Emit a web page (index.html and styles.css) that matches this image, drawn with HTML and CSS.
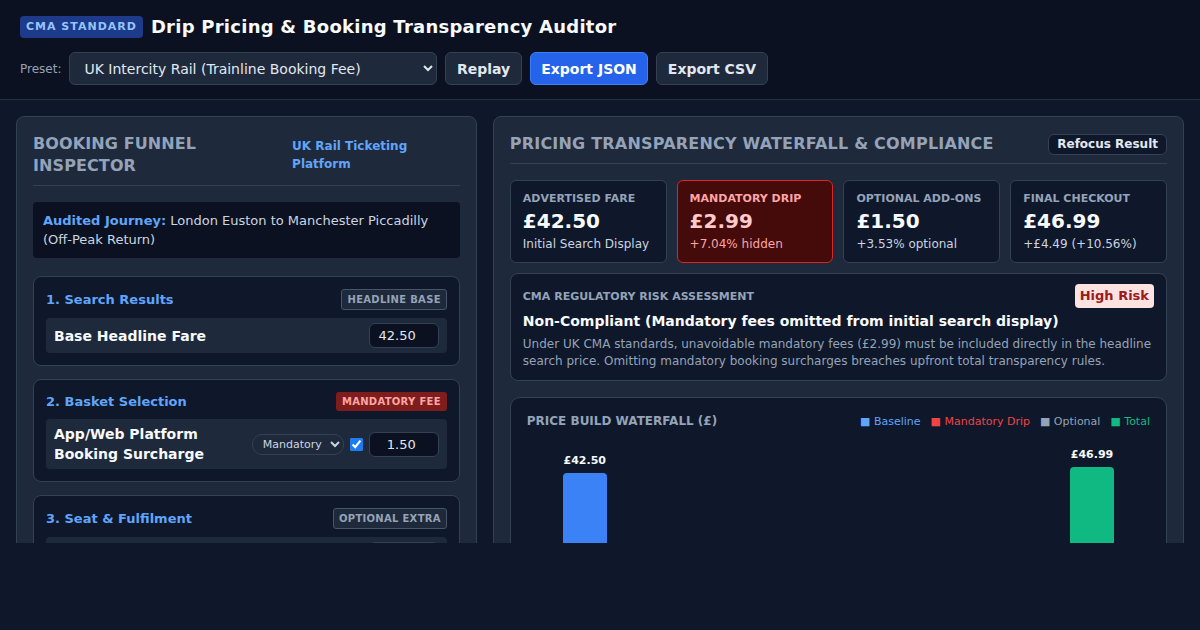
FILE: index.html
```html
<!DOCTYPE html>
<html lang="en">
<head>
    <meta charset="UTF-8">
    <meta name="viewport" content="width=device-width, initial-scale=1.0">
    <title>Drip Pricing &amp; Booking Transparency Auditor</title>
    <link rel="stylesheet" href="styles.css">
</head>
<body>
    <header class="topbar">
        <div class="brand">
            <span class="std-badge">CMA STANDARD</span>
            <h1>Drip Pricing &amp; Booking Transparency Auditor</h1>
        </div>
        <div class="controls">
            <label for="preset" class="preset-label">Preset:</label>
            <select id="preset" class="preset-select">
                <option>UK Intercity Rail (Trainline Booking Fee)</option>
                <option>Concert Ticketing (Service Fee)</option>
                <option>Budget Airline (Card Surcharge)</option>
            </select>
            <button class="btn">Replay</button>
            <button class="btn btn-primary">Export JSON</button>
            <button class="btn">Export CSV</button>
        </div>
    </header>

    <main class="workspace">
        <section class="panel">
            <div class="panel-head">
                <h2 class="panel-title">Booking Funnel Inspector</h2>
                <span class="platform">UK Rail Ticketing Platform</span>
            </div>

            <div class="journey">
                <strong>Audited Journey:</strong> London Euston to Manchester Piccadilly (Off-Peak Return)
            </div>

            <div class="step">
                <div class="step-head">
                    <span class="step-title">1. Search Results</span>
                    <span class="tag">HEADLINE BASE</span>
                </div>
                <div class="fee-row">
                    <span class="fee-name">Base Headline Fare</span>
                    <div class="fee-controls">
                        <input type="text" class="amount" value="42.50">
                    </div>
                </div>
            </div>

            <div class="step">
                <div class="step-head">
                    <span class="step-title">2. Basket Selection</span>
                    <span class="tag tag-mandatory">MANDATORY FEE</span>
                </div>
                <div class="fee-row">
                    <span class="fee-name">App/Web Platform Booking Surcharge</span>
                    <div class="fee-controls">
                        <select class="kind">
                            <option>Mandatory</option>
                            <option>Optional</option>
                        </select>
                        <input type="checkbox" class="toggle" checked>
                        <input type="text" class="amount" value="1.50">
                    </div>
                </div>
            </div>

            <div class="step">
                <div class="step-head">
                    <span class="step-title">3. Seat &amp; Fulfilment</span>
                    <span class="tag">OPTIONAL EXTRA</span>
                </div>
                <div class="fee-row">
                    <span class="fee-name">Seat Reservation</span>
                    <div class="fee-controls">
                        <select class="kind">
                            <option>Optional</option>
                            <option>Mandatory</option>
                        </select>
                        <input type="checkbox" class="toggle" checked>
                        <input type="text" class="amount" value="1.50">
                    </div>
                </div>
            </div>
        </section>

        <section class="panel">
            <div class="panel-head">
                <h2 class="panel-title panel-title-wide">Pricing Transparency Waterfall &amp; Compliance</h2>
                <button class="btn-small">Refocus Result</button>
            </div>

            <div class="stats">
                <div class="stat">
                    <div class="stat-label">Advertised Fare</div>
                    <div class="stat-value">£42.50</div>
                    <div class="stat-sub">Initial Search Display</div>
                </div>
                <div class="stat stat-drip">
                    <div class="stat-label">Mandatory Drip</div>
                    <div class="stat-value">£2.99</div>
                    <div class="stat-sub">+7.04% hidden</div>
                </div>
                <div class="stat">
                    <div class="stat-label">Optional Add-ons</div>
                    <div class="stat-value">£1.50</div>
                    <div class="stat-sub">+3.53% optional</div>
                </div>
                <div class="stat">
                    <div class="stat-label">Final Checkout</div>
                    <div class="stat-value">£46.99</div>
                    <div class="stat-sub">+£4.49 (+10.56%)</div>
                </div>
            </div>

            <div class="risk">
                <div class="risk-head">
                    <span class="risk-label">CMA Regulatory Risk Assessment</span>
                    <span class="risk-badge">High Risk</span>
                </div>
                <div class="risk-verdict">Non-Compliant (Mandatory fees omitted from initial search display)</div>
                <p class="risk-text">Under UK CMA standards, unavoidable mandatory fees (£2.99) must be included directly in the headline search price. Omitting mandatory booking surcharges breaches upfront total transparency rules.</p>
            </div>

            <div class="chart-card">
                <div class="chart-head">
                    <span class="chart-title">Price Build Waterfall (£)</span>
                    <div class="legend">
                        <span class="lg-base">■ Baseline</span>
                        <span class="lg-drip">■ Mandatory Drip</span>
                        <span class="lg-opt">■ Optional</span>
                        <span class="lg-total">■ Total</span>
                    </div>
                </div>
                <div class="chart">
                    <div class="col">
                        <span class="bar-label">£42.50</span>
                        <div class="bar bar-base" style="height: 180px;"></div>
                    </div>
                    <div class="col"></div>
                    <div class="col"></div>
                    <div class="col">
                        <span class="bar-label">£46.99</span>
                        <div class="bar bar-total" style="height: 186px;"></div>
                    </div>
                </div>
            </div>
        </section>
    </main>
</body>
</html>
```

FILE: styles.css
```css
* {
    box-sizing: border-box;
}
:root {
    color-scheme: dark;
}
body {
    margin: 0;
    font-family: "DejaVu Sans", sans-serif;
    background-color: #0f172a;
    color: #e2e8f0;
}
.topbar {
    background-color: #0b1120;
    border-bottom: 1px solid #263244;
    padding: 16px 20px 14px;
}
.brand {
    display: flex;
    align-items: center;
    gap: 8px;
}
.std-badge {
    background-color: #1e3a8a;
    color: #93c5fd;
    font-size: 11px;
    font-weight: bold;
    letter-spacing: 1px;
    line-height: 14px;
    padding: 4px 6px;
    border-radius: 4px;
}
h1 {
    margin: 0;
    font-size: 18px;
    letter-spacing: 0.25px;
    line-height: 22px;
    color: #f8fafc;
}
.controls {
    display: flex;
    align-items: center;
    gap: 8px;
    margin-top: 14px;
}
.preset-label {
    font-size: 12px;
    color: #94a3b8;
}
.preset-select {
    width: 368px;
    height: 33px;
    padding: 0 10px;
    background-color: #1e293b;
    color: #e2e8f0;
    border: 1px solid #334155;
    border-radius: 6px;
    font-family: inherit;
    font-size: 14px;
}
.btn {
    height: 33px;
    padding: 0 10.5px;
    background-color: #1e293b;
    color: #e2e8f0;
    border: 1px solid #334155;
    border-radius: 6px;
    font-family: inherit;
    font-size: 14px;
    font-weight: bold;
}
.btn-primary {
    background-color: #2563eb;
    border-color: #3b82f6;
    color: #ffffff;
}
.workspace {
    display: grid;
    grid-template-columns: 2fr 3fr;
    gap: 16px;
    align-items: start;
    height: 443px;
    padding: 16px 16px 0;
    overflow: hidden;
}
.panel {
    background-color: #1e293b;
    border: 1px solid #334155;
    border-radius: 8px;
    padding: 16px;
}
.panel-head {
    display: flex;
    justify-content: space-between;
    align-items: center;
    gap: 3px;
    padding-bottom: 8px;
    border-bottom: 1px solid #334155;
    margin-bottom: 16px;
}
.panel-title {
    margin: 0;
    font-size: 16px;
    line-height: 22px;
    letter-spacing: 0.1px;
    text-transform: uppercase;
    color: #94a3b8;
}
.panel-title-wide {
    letter-spacing: 0.2px;
}
.platform {
    font-size: 12px;
    font-weight: bold;
    line-height: 18px;
    color: #60a5fa;
}
.journey {
    background-color: #0b1120;
    border-radius: 4px;
    padding: 9px 10px;
    font-size: 13px;
    line-height: 19px;
    color: #cbd5e1;
    margin-bottom: 18px;
}
.journey strong {
    color: #60a5fa;
}
.step {
    background-color: #0f172a;
    border: 1px solid #334155;
    border-radius: 8px;
    padding: 12px;
    margin-bottom: 13px;
}
.step-head {
    display: flex;
    justify-content: space-between;
    align-items: center;
    margin-bottom: 8px;
}
.step-title {
    font-size: 13px;
    font-weight: bold;
    color: #60a5fa;
}
.tag {
    font-size: 10px;
    font-weight: bold;
    letter-spacing: 0.3px;
    line-height: 13px;
    padding: 3px 5px;
    color: #94a3b8;
    background-color: #1e293b;
    border: 1px solid #475569;
    border-radius: 3px;
}
.tag-mandatory {
    color: #fca5a5;
    background-color: #7f1d1d;
    border: 0;
    padding: 3px 6px;
}
.fee-row {
    display: flex;
    align-items: center;
    gap: 8px;
    background-color: #1e293b;
    border-radius: 4px;
    padding: 5px 8px;
}
.fee-name {
    flex: 1;
    font-size: 14px;
    font-weight: bold;
    line-height: 20px;
    color: #f8fafc;
}
.fee-controls {
    display: flex;
    align-items: center;
    gap: 6px;
}
.amount {
    width: 70px;
    height: 25px;
    padding: 0 22px 0 8px;
    text-align: right;
    background-color: #0b1120;
    color: #e2e8f0;
    border: 1px solid #334155;
    border-radius: 6px;
    font-family: inherit;
    font-size: 13px;
}
.kind {
    width: 92px;
    height: 21px;
    padding: 0 2px 0 6px;
    background-color: #1e293b;
    color: #cbd5e1;
    border: 1px solid #334155;
    border-radius: 10px;
    font-family: inherit;
    font-size: 11px;
}
.toggle {
    width: 13px;
    height: 13px;
    margin: 0;
    accent-color: #1d7cf2;
}
.btn-small {
    padding: 2px 8px;
    line-height: 15px;
    background-color: #0f172a;
    color: #e2e8f0;
    border: 1px solid #334155;
    border-radius: 6px;
    font-family: inherit;
    font-size: 12px;
    font-weight: bold;
}
.stats {
    display: grid;
    grid-template-columns: repeat(4, 1fr);
    gap: 10px;
    margin-bottom: 10px;
}
.stat {
    background-color: #0f172a;
    border: 1px solid #334155;
    border-radius: 6px;
    padding: 11px 12px 10px;
}
.stat-label {
    font-size: 11px;
    font-weight: bold;
    line-height: 14px;
    text-transform: uppercase;
    color: #94a3b8;
}
.stat-value {
    font-size: 20px;
    font-weight: bold;
    line-height: 24px;
    margin-top: 3px;
    color: #f8fafc;
}
.stat-sub {
    font-size: 12px;
    line-height: 16px;
    margin-top: 3px;
    color: #cbd5e1;
}
.stat-drip {
    background-color: #450a0a;
    border-color: #dc2626;
}
.stat-drip .stat-label,
.stat-drip .stat-sub {
    color: #fca5a5;
}
.stat-drip .stat-value {
    color: #fecaca;
}
.risk {
    background-color: #0f172a;
    border: 1px solid #334155;
    border-radius: 8px;
    padding: 10px 12px 10px;
    margin-bottom: 16px;
}
.risk-head {
    display: flex;
    justify-content: space-between;
    align-items: center;
}
.risk-label {
    font-size: 11px;
    font-weight: bold;
    text-transform: uppercase;
    color: #94a3b8;
}
.risk-badge {
    background-color: #fee2e2;
    color: #991b1b;
    font-size: 13px;
    font-weight: bold;
    line-height: 14px;
    padding: 5px;
    border-radius: 4px;
}
.risk-verdict {
    font-size: 14px;
    font-weight: bold;
    line-height: 20px;
    margin-top: 3px;
    color: #f8fafc;
}
.risk-text {
    margin: 5px 0 0;
    font-size: 12px;
    line-height: 17px;
    color: #94a3b8;
}
.chart-card {
    background-color: #0f172a;
    border: 1px solid #334155;
    border-radius: 10px;
    padding: 16px;
}
.chart-head {
    display: flex;
    justify-content: space-between;
    align-items: center;
}
.chart-title {
    font-size: 12px;
    font-weight: bold;
    text-transform: uppercase;
    color: #94a3b8;
}
.legend {
    display: flex;
    gap: 10px;
    font-size: 11px;
}
.lg-base { color: #60a5fa; }
.lg-drip { color: #ef4444; }
.lg-opt { color: #94a3b8; }
.lg-total { color: #10b981; }
.chart {
    display: flex;
    justify-content: space-between;
    align-items: flex-end;
    height: 217px;
    padding: 0 36px;
    margin-top: 8px;
}
.col {
    width: 44px;
    display: flex;
    flex-direction: column;
    align-items: center;
    gap: 6px;
}
.bar-label {
    font-size: 11px;
    font-weight: bold;
    line-height: 13px;
    color: #f8fafc;
    white-space: nowrap;
}
.bar {
    width: 44px;
    border-radius: 4px 4px 0 0;
}
.bar-base {
    background-color: #3b82f6;
}
.bar-total {
    background-color: #10b981;
}
```
